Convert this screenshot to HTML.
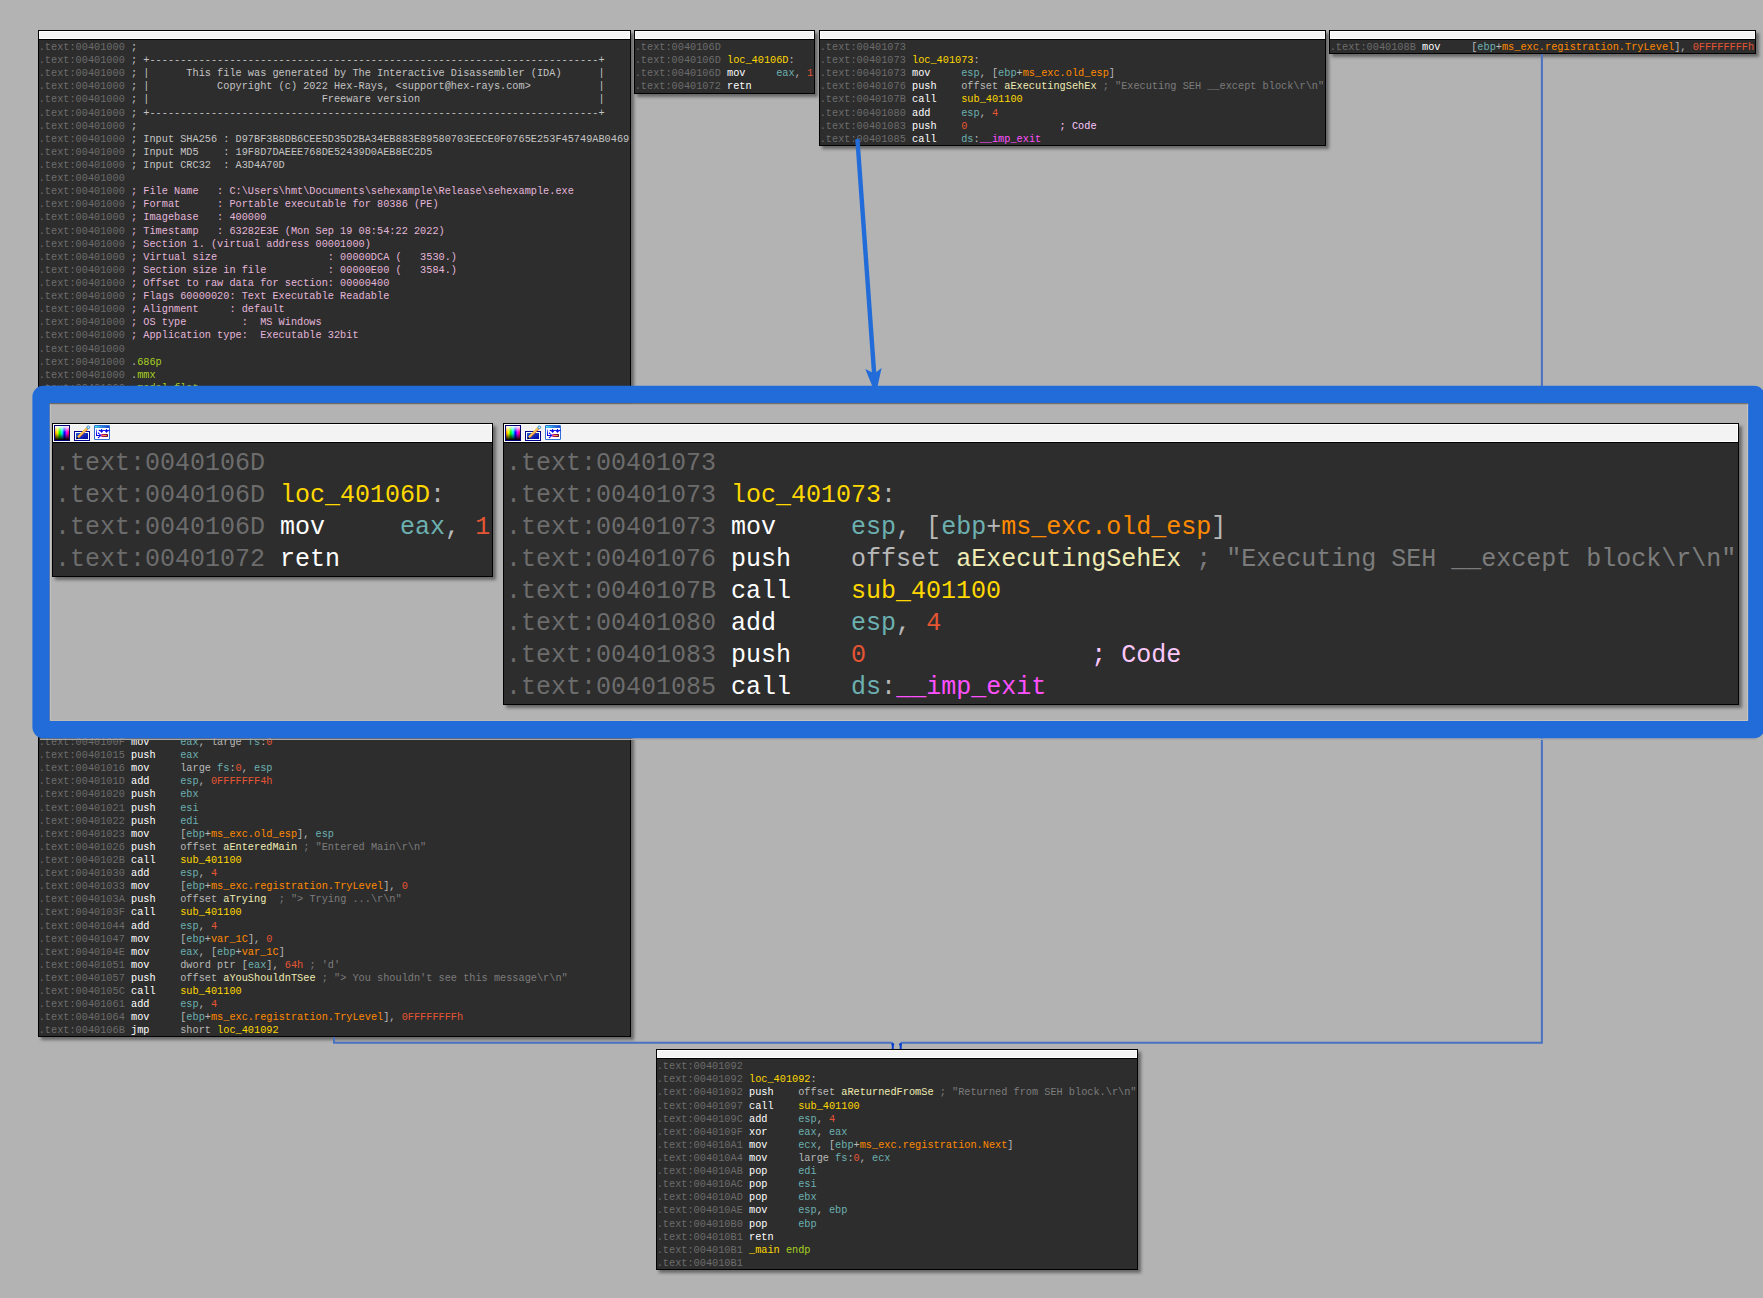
<!DOCTYPE html>
<html><head><meta charset="utf-8"><style>
html,body{margin:0;padding:0}
body{width:1763px;height:1298px;overflow:hidden;background:#b3b3b3;position:relative;font-family:"Liberation Mono",monospace}
.nd{position:absolute;box-sizing:border-box;border:1px solid #000;background:#2d2d2d;box-shadow:3px 3px 3px rgba(0,0,0,.42);overflow:hidden}
.nd .t{position:absolute;left:0;top:0;right:0;height:8px;background:#f3f3f3;box-shadow:inset 0 0 0 1px #fff;border-bottom:1px solid #000}
.l{position:absolute;left:-0.3px;font-size:10.25px;line-height:13px;height:13px;white-space:pre;color:#ccc}
.z{position:absolute;box-sizing:border-box;border:1px solid #000;background:#2d2d2d;box-shadow:3px 3px 3px rgba(0,0,0,.42);overflow:hidden}
.z .t{position:absolute;left:0;top:0;right:0;height:18px;background:#f3f3f3;box-shadow:inset 0 0 0 1px #fff;border-bottom:1px solid #000}
.zct{position:absolute;left:2px;top:24.35px;font-size:25px;line-height:32px;white-space:pre;color:#ccc}
i{font-style:normal}
.ka{color:#6c6c6c}
.km{color:#ffffff}
.kr{color:#6cb0b0}
.kp{color:#b8b8b8}
.kn{color:#e55533}
.ks{color:#ff8a00}
.ky{color:#ffd800}
.kl{color:#f0ecb4}
.kc{color:#7c7c7c}
.kk{color:#fcc8fc}
.ki{color:#ff50ff}
.kh{color:#c4c4c4}
.kq{color:#e4b6da}
.kg{color:#a8d020}
.ic{position:absolute;left:0;top:0}

</style></head><body>
<div class="nd" style="left:38px;top:30px;width:593px;height:1007px"><div class="t"></div>
<div class="l" style="top:10.000px"><i class="ka">.text:00401000</i> <i class="kh">;</i></div><div class="l" style="top:23.113px"><i class="ka">.text:00401000</i> <i class="kh">; +-------------------------------------------------------------------------+</i></div><div class="l" style="top:36.226px"><i class="ka">.text:00401000</i> <i class="kh">; |      This file was generated by The Interactive Disassembler (IDA)      |</i></div><div class="l" style="top:49.339px"><i class="ka">.text:00401000</i> <i class="kh">; |           Copyright (c) 2022 Hex-Rays, &lt;support@hex-rays.com&gt;           |</i></div><div class="l" style="top:62.452px"><i class="ka">.text:00401000</i> <i class="kh">; |                            Freeware version                             |</i></div><div class="l" style="top:75.565px"><i class="ka">.text:00401000</i> <i class="kh">; +-------------------------------------------------------------------------+</i></div><div class="l" style="top:88.678px"><i class="ka">.text:00401000</i> <i class="kh">;</i></div><div class="l" style="top:101.791px"><i class="ka">.text:00401000</i> <i class="kh">; Input SHA256 : D97BF3B8DB6CEE5D35D2BA34EB883E89580703EECE0F0765E253F45749AB0469</i></div><div class="l" style="top:114.904px"><i class="ka">.text:00401000</i> <i class="kh">; Input MD5    : 19F8D7DAEEE768DE52439D0AEB8EC2D5</i></div><div class="l" style="top:128.017px"><i class="ka">.text:00401000</i> <i class="kh">; Input CRC32  : A3D4A70D</i></div><div class="l" style="top:141.130px"><i class="ka">.text:00401000</i></div><div class="l" style="top:154.243px"><i class="ka">.text:00401000</i> <i class="kq">; File Name   : C:\Users\hmt\Documents\sehexample\Release\sehexample.exe</i></div><div class="l" style="top:167.356px"><i class="ka">.text:00401000</i> <i class="kq">; Format      : Portable executable for 80386 (PE)</i></div><div class="l" style="top:180.469px"><i class="ka">.text:00401000</i> <i class="kq">; Imagebase   : 400000</i></div><div class="l" style="top:193.582px"><i class="ka">.text:00401000</i> <i class="kq">; Timestamp   : 63282E3E (Mon Sep 19 08:54:22 2022)</i></div><div class="l" style="top:206.695px"><i class="ka">.text:00401000</i> <i class="kq">; Section 1. (virtual address 00001000)</i></div><div class="l" style="top:219.808px"><i class="ka">.text:00401000</i> <i class="kq">; Virtual size                  : 00000DCA (   3530.)</i></div><div class="l" style="top:232.921px"><i class="ka">.text:00401000</i> <i class="kq">; Section size in file          : 00000E00 (   3584.)</i></div><div class="l" style="top:246.034px"><i class="ka">.text:00401000</i> <i class="kq">; Offset to raw data for section: 00000400</i></div><div class="l" style="top:259.147px"><i class="ka">.text:00401000</i> <i class="kq">; Flags 60000020: Text Executable Readable</i></div><div class="l" style="top:272.260px"><i class="ka">.text:00401000</i> <i class="kq">; Alignment     : default</i></div><div class="l" style="top:285.373px"><i class="ka">.text:00401000</i> <i class="kq">; OS type         :  MS Windows</i></div><div class="l" style="top:298.486px"><i class="ka">.text:00401000</i> <i class="kq">; Application type:  Executable 32bit</i></div><div class="l" style="top:311.599px"><i class="ka">.text:00401000</i></div><div class="l" style="top:324.712px"><i class="ka">.text:00401000</i> <i class="kp">.</i><i class="kg">686p</i></div><div class="l" style="top:337.825px"><i class="ka">.text:00401000</i> <i class="kp">.</i><i class="kg">mmx</i></div><div class="l" style="top:350.938px"><i class="ka">.text:00401000</i> <i class="kp">.</i><i class="kg">model flat</i></div><div class="l" style="top:704.989px"><i class="ka">.text:0040100F</i> <i class="km">mov     </i><i class="kr">eax</i><i class="kp">, large </i><i class="kr">fs</i><i class="kp">:</i><i class="kn">0</i></div><div class="l" style="top:718.102px"><i class="ka">.text:00401015</i> <i class="km">push    </i><i class="kr">eax</i></div><div class="l" style="top:731.215px"><i class="ka">.text:00401016</i> <i class="km">mov     </i><i class="kp">large </i><i class="kr">fs</i><i class="kp">:</i><i class="kn">0</i><i class="kp">, </i><i class="kr">esp</i></div><div class="l" style="top:744.328px"><i class="ka">.text:0040101D</i> <i class="km">add     </i><i class="kr">esp</i><i class="kp">, </i><i class="kn">0FFFFFFF4h</i></div><div class="l" style="top:757.441px"><i class="ka">.text:00401020</i> <i class="km">push    </i><i class="kr">ebx</i></div><div class="l" style="top:770.554px"><i class="ka">.text:00401021</i> <i class="km">push    </i><i class="kr">esi</i></div><div class="l" style="top:783.667px"><i class="ka">.text:00401022</i> <i class="km">push    </i><i class="kr">edi</i></div><div class="l" style="top:796.780px"><i class="ka">.text:00401023</i> <i class="km">mov     </i><i class="kp">[</i><i class="kr">ebp</i><i class="kp">+</i><i class="ks">ms_exc.old_esp</i><i class="kp">], </i><i class="kr">esp</i></div><div class="l" style="top:809.893px"><i class="ka">.text:00401026</i> <i class="km">push    </i><i class="kp">offset </i><i class="kl">aEnteredMain</i><i class="kc"> ; &quot;Entered Main\r\n&quot;</i></div><div class="l" style="top:823.006px"><i class="ka">.text:0040102B</i> <i class="km">call    </i><i class="ky">sub_401100</i></div><div class="l" style="top:836.119px"><i class="ka">.text:00401030</i> <i class="km">add     </i><i class="kr">esp</i><i class="kp">, </i><i class="kn">4</i></div><div class="l" style="top:849.232px"><i class="ka">.text:00401033</i> <i class="km">mov     </i><i class="kp">[</i><i class="kr">ebp</i><i class="kp">+</i><i class="ks">ms_exc.registration.TryLevel</i><i class="kp">], </i><i class="kn">0</i></div><div class="l" style="top:862.345px"><i class="ka">.text:0040103A</i> <i class="km">push    </i><i class="kp">offset </i><i class="kl">aTrying</i><i class="kc">  ; &quot;&gt; Trying ...\r\n&quot;</i></div><div class="l" style="top:875.458px"><i class="ka">.text:0040103F</i> <i class="km">call    </i><i class="ky">sub_401100</i></div><div class="l" style="top:888.571px"><i class="ka">.text:00401044</i> <i class="km">add     </i><i class="kr">esp</i><i class="kp">, </i><i class="kn">4</i></div><div class="l" style="top:901.684px"><i class="ka">.text:00401047</i> <i class="km">mov     </i><i class="kp">[</i><i class="kr">ebp</i><i class="kp">+</i><i class="ks">var_1C</i><i class="kp">], </i><i class="kn">0</i></div><div class="l" style="top:914.797px"><i class="ka">.text:0040104E</i> <i class="km">mov     </i><i class="kr">eax</i><i class="kp">, [</i><i class="kr">ebp</i><i class="kp">+</i><i class="ks">var_1C</i><i class="kp">]</i></div><div class="l" style="top:927.910px"><i class="ka">.text:00401051</i> <i class="km">mov     </i><i class="kp">dword ptr [</i><i class="kr">eax</i><i class="kp">], </i><i class="kn">64h</i><i class="kc"> ; &#x27;d&#x27;</i></div><div class="l" style="top:941.023px"><i class="ka">.text:00401057</i> <i class="km">push    </i><i class="kp">offset </i><i class="kl">aYouShouldnTSee</i><i class="kc"> ; &quot;&gt; You shouldn&#x27;t see this message\r\n&quot;</i></div><div class="l" style="top:954.136px"><i class="ka">.text:0040105C</i> <i class="km">call    </i><i class="ky">sub_401100</i></div><div class="l" style="top:967.249px"><i class="ka">.text:00401061</i> <i class="km">add     </i><i class="kr">esp</i><i class="kp">, </i><i class="kn">4</i></div><div class="l" style="top:980.362px"><i class="ka">.text:00401064</i> <i class="km">mov     </i><i class="kp">[</i><i class="kr">ebp</i><i class="kp">+</i><i class="ks">ms_exc.registration.TryLevel</i><i class="kp">], </i><i class="kn">0FFFFFFFFh</i></div><div class="l" style="top:993.475px"><i class="ka">.text:0040106B</i> <i class="km">jmp     </i><i class="kp">short </i><i class="ky">loc_401092</i></div>
</div>
<div class="nd" style="left:634px;top:30px;width:181px;height:64px"><div class="t"></div><div class="l" style="top:10.000px"><i class="ka">.text:0040106D</i></div><div class="l" style="top:23.113px"><i class="ka">.text:0040106D</i> <i class="ky">loc_40106D</i><i class="kp">:</i></div><div class="l" style="top:36.226px"><i class="ka">.text:0040106D</i> <i class="km">mov     </i><i class="kr">eax</i><i class="kp">, </i><i class="kn">1</i></div><div class="l" style="top:49.339px"><i class="ka">.text:00401072</i> <i class="km">retn    </i></div></div>
<div class="nd" style="left:819px;top:30px;width:507px;height:116px"><div class="t"></div><div class="l" style="top:10.000px"><i class="ka">.text:00401073</i></div><div class="l" style="top:23.113px"><i class="ka">.text:00401073</i> <i class="ky">loc_401073</i><i class="kp">:</i></div><div class="l" style="top:36.226px"><i class="ka">.text:00401073</i> <i class="km">mov     </i><i class="kr">esp</i><i class="kp">, [</i><i class="kr">ebp</i><i class="kp">+</i><i class="ks">ms_exc.old_esp</i><i class="kp">]</i></div><div class="l" style="top:49.339px"><i class="ka">.text:00401076</i> <i class="km">push    </i><i class="kp">offset </i><i class="kl">aExecutingSehEx</i><i class="kc"> ; &quot;Executing SEH __except block\r\n&quot;</i></div><div class="l" style="top:62.452px"><i class="ka">.text:0040107B</i> <i class="km">call    </i><i class="ky">sub_401100</i></div><div class="l" style="top:75.565px"><i class="ka">.text:00401080</i> <i class="km">add     </i><i class="kr">esp</i><i class="kp">, </i><i class="kn">4</i></div><div class="l" style="top:88.678px"><i class="ka">.text:00401083</i> <i class="km">push    </i><i class="kn">0</i><i class="kk">               ; Code</i></div><div class="l" style="top:101.791px"><i class="ka">.text:00401085</i> <i class="km">call    </i><i class="kr">ds</i><i class="kp">:</i><i class="ki">__imp_exit</i></div></div>
<div class="nd" style="left:1329px;top:30px;width:427px;height:24px"><div class="t"></div><div class="l" style="top:10.000px"><i class="ka">.text:0040108B</i> <i class="km">mov     </i><i class="kp">[</i><i class="kr">ebp</i><i class="kp">+</i><i class="ks">ms_exc.registration.TryLevel</i><i class="kp">], </i><i class="kn">0FFFFFFFFh</i></div></div>
<div class="nd" style="left:656px;top:1049px;width:482px;height:221px"><div class="t"></div><div class="l" style="top:10.200px"><i class="ka">.text:00401092</i></div><div class="l" style="top:23.313px"><i class="ka">.text:00401092</i> <i class="ky">loc_401092</i><i class="kp">:</i></div><div class="l" style="top:36.426px"><i class="ka">.text:00401092</i> <i class="km">push    </i><i class="kp">offset </i><i class="kl">aReturnedFromSe</i><i class="kc"> ; &quot;Returned from SEH block.\r\n&quot;</i></div><div class="l" style="top:49.539px"><i class="ka">.text:00401097</i> <i class="km">call    </i><i class="ky">sub_401100</i></div><div class="l" style="top:62.652px"><i class="ka">.text:0040109C</i> <i class="km">add     </i><i class="kr">esp</i><i class="kp">, </i><i class="kn">4</i></div><div class="l" style="top:75.765px"><i class="ka">.text:0040109F</i> <i class="km">xor     </i><i class="kr">eax</i><i class="kp">, </i><i class="kr">eax</i></div><div class="l" style="top:88.878px"><i class="ka">.text:004010A1</i> <i class="km">mov     </i><i class="kr">ecx</i><i class="kp">, [</i><i class="kr">ebp</i><i class="kp">+</i><i class="ks">ms_exc.registration.Next</i><i class="kp">]</i></div><div class="l" style="top:101.991px"><i class="ka">.text:004010A4</i> <i class="km">mov     </i><i class="kp">large </i><i class="kr">fs</i><i class="kp">:</i><i class="kn">0</i><i class="kp">, </i><i class="kr">ecx</i></div><div class="l" style="top:115.104px"><i class="ka">.text:004010AB</i> <i class="km">pop     </i><i class="kr">edi</i></div><div class="l" style="top:128.217px"><i class="ka">.text:004010AC</i> <i class="km">pop     </i><i class="kr">esi</i></div><div class="l" style="top:141.330px"><i class="ka">.text:004010AD</i> <i class="km">pop     </i><i class="kr">ebx</i></div><div class="l" style="top:154.443px"><i class="ka">.text:004010AE</i> <i class="km">mov     </i><i class="kr">esp</i><i class="kp">, </i><i class="kr">ebp</i></div><div class="l" style="top:167.556px"><i class="ka">.text:004010B0</i> <i class="km">pop     </i><i class="kr">ebp</i></div><div class="l" style="top:180.669px"><i class="ka">.text:004010B1</i> <i class="km">retn    </i></div><div class="l" style="top:193.782px"><i class="ka">.text:004010B1</i> <i class="ky">_main</i><i class="kp"> </i><i class="kg">endp</i></div><div class="l" style="top:206.895px"><i class="ka">.text:004010B1</i></div></div>
<svg width="1763" height="1298" style="position:absolute;left:0;top:0">
<g fill="none" stroke="#4a72c2" stroke-width="2">
<path d="M1541.9 54 V1042.8 H900.7"/>
<path d="M334 1037 V1042.8 H892.8"/>
</g>
<path d="M857.4 139 L874.1 373" stroke="#226cd9" stroke-width="4.4" fill="none"/>
<path d="M865.3 369.1 L872.4 372.6 L876 372.2 L881.6 368 L877.4 387 L872.6 387 Z" fill="#226cd9"/>
<path d="M892.8 1043.5 V1049 M900.7 1043.5 V1049" stroke="#0a40d0" stroke-width="2"/><circle cx="892.8" cy="1044.4" r="1.4" fill="#0a40d0"/><circle cx="900.5" cy="1044.4" r="1.4" fill="#0a40d0"/>
<path d="M40 739.2 H1757" stroke="#a8a8a8" stroke-width="1.6"/>
<path fill="#226cd9" fill-rule="evenodd" d="M43.4 385.7 H1754 A11 11 0 0 1 1765 396.7 V727.2 A11 11 0 0 1 1754 738.2 H43.4 A11 11 0 0 1 32.4 727.2 V396.7 A11 11 0 0 1 43.4 385.7 Z M49.8 403.2 V720.8 H1747.9 V403.2 Z"/>
<rect x="49.8" y="403.2" width="1698.3" height="317.6" fill="#b3b3b3"/>
<path d="M49.8 403.7 H1748" stroke="#5a5048" stroke-width="1" opacity="0.8"/>
<path d="M50.3 404 V720.5 H1747.6 V404" stroke="#d8cfc0" stroke-width="1" fill="none" opacity="0.6"/>
</svg>
<div class="z" style="left:52px;top:423px;width:441px;height:154px"><div class="t"></div><svg class="ic" width="60" height="17" viewBox="0 0 60 17">
<defs>
<linearGradient id="huea" x1="0" x2="1" y1="0" y2="0">
<stop offset="0" stop-color="#ff8000"/><stop offset="0.17" stop-color="#ffff00"/><stop offset="0.34" stop-color="#00ff00"/><stop offset="0.5" stop-color="#00ffff"/><stop offset="0.67" stop-color="#0000ff"/><stop offset="0.84" stop-color="#ff00ff"/><stop offset="1" stop-color="#ff0040"/>
</linearGradient>
<linearGradient id="vala" x1="0" x2="0" y1="0" y2="1">
<stop offset="0" stop-color="#fff" stop-opacity="1"/><stop offset="0.45" stop-color="#fff" stop-opacity="0"/><stop offset="0.5" stop-color="#000" stop-opacity="0"/><stop offset="1" stop-color="#000" stop-opacity="1"/>
</linearGradient>
<linearGradient id="tba" x1="0" x2="1" y1="0" y2="0"><stop offset="0" stop-color="#50f0f8"/><stop offset="0.5" stop-color="#2c8ce0"/><stop offset="1" stop-color="#2040c8"/></linearGradient>
<linearGradient id="pba" x1="0" x2="1" y1="0" y2="1"><stop offset="0" stop-color="#2858d0"/><stop offset="1" stop-color="#0000a0"/></linearGradient>
<linearGradient id="lga" x1="0" x2="0" y1="0" y2="1"><stop offset="0" stop-color="#a0a8ff"/><stop offset="0.5" stop-color="#3030f0"/><stop offset="1" stop-color="#0000e0"/></linearGradient>
<linearGradient id="mga" x1="0" x2="1" y1="0" y2="0"><stop offset="0" stop-color="#c8108a"/><stop offset="1" stop-color="#500838"/></linearGradient>
</defs>
<g transform="translate(1,1)">
<rect x="0" y="0" width="16" height="16" fill="#000078"/>
<rect x="1" y="1" width="14" height="14" fill="url(#huea)"/>
<rect x="1" y="1" width="14" height="14" fill="url(#vala)"/>
</g>
<g transform="translate(21,1)">
<rect x="0" y="6" width="16" height="10" fill="#000090"/>
<rect x="1" y="7" width="14" height="8" fill="#f0fcff"/>
<rect x="2" y="8" width="12" height="6" fill="url(#pba)"/>
<path d="M4.2 12.4 L13.4 3.4" stroke="#e07020" stroke-width="2.3"/>
<path d="M3.7 11.9 L12.9 2.9" stroke="#ffcc30" stroke-width="1.1"/>
<path d="M4.3 12.3 L13.2 3.6" stroke="#fff8e0" stroke-width="0.6"/>
<circle cx="14.3" cy="2.3" r="1.35" fill="#d8f0ff" stroke="#2f8fc8" stroke-width="1"/>
<path d="M2.4 14.4 L3.2 12.2 L4.6 13.6 Z" fill="#000"/>
</g>
<g transform="translate(41,1)">
<rect x="0" y="0" width="16" height="15" rx="1.2" fill="#2f6fd6"/><rect x="1" y="3" width="14" height="11" fill="#fff"/>
<rect x="1" y="1" width="14" height="1.6" fill="url(#tba)"/>
<path d="M2.5 4.2 V10.4 H6.6" stroke="url(#lga)" stroke-width="1.05" fill="none"/>
<path d="M4.5 8.3 L7.1 10.4 L4.5 12.5" stroke="#0000f0" stroke-width="1" fill="none"/>
<circle cx="4.5" cy="8.3" r="0.75" fill="#0000f0"/><circle cx="4.5" cy="12.5" r="0.75" fill="#0000f0"/>
<path d="M5.4 5.45 H14.8" stroke="#0000f0" stroke-width="0.9"/>
<circle cx="5.4" cy="5.45" r="0.75" fill="#0000f0"/><circle cx="14.8" cy="5.45" r="0.75" fill="#0000f0"/>
<path d="M7.6 4 V7.3 M12.5 4 V7.3 M6.1 5.7 L7.6 7.4 L9.1 5.7 M11 5.7 L12.5 7.4 L14 5.7" stroke="#0000e8" stroke-width="0.95" fill="none"/>
<rect x="7.2" y="9" width="6.8" height="3" rx="0.7" fill="url(#mga)"/>
<rect x="8.3" y="10" width="4.5" height="1" fill="#ffa030"/>
</g>
</svg>
<div class="zct"><i class="ka">.text:0040106D</i>
<i class="ka">.text:0040106D</i> <i class="ky">loc_40106D</i><i class="kp">:</i>
<i class="ka">.text:0040106D</i> <i class="km">mov     </i><i class="kr">eax</i><i class="kp">, </i><i class="kn">1</i>
<i class="ka">.text:00401072</i> <i class="km">retn    </i></div></div>
<div class="z" style="left:503px;top:423px;width:1236px;height:282px"><div class="t"></div><svg class="ic" width="60" height="17" viewBox="0 0 60 17">
<defs>
<linearGradient id="hueb" x1="0" x2="1" y1="0" y2="0">
<stop offset="0" stop-color="#ff8000"/><stop offset="0.17" stop-color="#ffff00"/><stop offset="0.34" stop-color="#00ff00"/><stop offset="0.5" stop-color="#00ffff"/><stop offset="0.67" stop-color="#0000ff"/><stop offset="0.84" stop-color="#ff00ff"/><stop offset="1" stop-color="#ff0040"/>
</linearGradient>
<linearGradient id="valb" x1="0" x2="0" y1="0" y2="1">
<stop offset="0" stop-color="#fff" stop-opacity="1"/><stop offset="0.45" stop-color="#fff" stop-opacity="0"/><stop offset="0.5" stop-color="#000" stop-opacity="0"/><stop offset="1" stop-color="#000" stop-opacity="1"/>
</linearGradient>
<linearGradient id="tbb" x1="0" x2="1" y1="0" y2="0"><stop offset="0" stop-color="#50f0f8"/><stop offset="0.5" stop-color="#2c8ce0"/><stop offset="1" stop-color="#2040c8"/></linearGradient>
<linearGradient id="pbb" x1="0" x2="1" y1="0" y2="1"><stop offset="0" stop-color="#2858d0"/><stop offset="1" stop-color="#0000a0"/></linearGradient>
<linearGradient id="lgb" x1="0" x2="0" y1="0" y2="1"><stop offset="0" stop-color="#a0a8ff"/><stop offset="0.5" stop-color="#3030f0"/><stop offset="1" stop-color="#0000e0"/></linearGradient>
<linearGradient id="mgb" x1="0" x2="1" y1="0" y2="0"><stop offset="0" stop-color="#c8108a"/><stop offset="1" stop-color="#500838"/></linearGradient>
</defs>
<g transform="translate(1,1)">
<rect x="0" y="0" width="16" height="16" fill="#000078"/>
<rect x="1" y="1" width="14" height="14" fill="url(#hueb)"/>
<rect x="1" y="1" width="14" height="14" fill="url(#valb)"/>
</g>
<g transform="translate(21,1)">
<rect x="0" y="6" width="16" height="10" fill="#000090"/>
<rect x="1" y="7" width="14" height="8" fill="#f0fcff"/>
<rect x="2" y="8" width="12" height="6" fill="url(#pbb)"/>
<path d="M4.2 12.4 L13.4 3.4" stroke="#e07020" stroke-width="2.3"/>
<path d="M3.7 11.9 L12.9 2.9" stroke="#ffcc30" stroke-width="1.1"/>
<path d="M4.3 12.3 L13.2 3.6" stroke="#fff8e0" stroke-width="0.6"/>
<circle cx="14.3" cy="2.3" r="1.35" fill="#d8f0ff" stroke="#2f8fc8" stroke-width="1"/>
<path d="M2.4 14.4 L3.2 12.2 L4.6 13.6 Z" fill="#000"/>
</g>
<g transform="translate(41,1)">
<rect x="0" y="0" width="16" height="15" rx="1.2" fill="#2f6fd6"/><rect x="1" y="3" width="14" height="11" fill="#fff"/>
<rect x="1" y="1" width="14" height="1.6" fill="url(#tbb)"/>
<path d="M2.5 4.2 V10.4 H6.6" stroke="url(#lgb)" stroke-width="1.05" fill="none"/>
<path d="M4.5 8.3 L7.1 10.4 L4.5 12.5" stroke="#0000f0" stroke-width="1" fill="none"/>
<circle cx="4.5" cy="8.3" r="0.75" fill="#0000f0"/><circle cx="4.5" cy="12.5" r="0.75" fill="#0000f0"/>
<path d="M5.4 5.45 H14.8" stroke="#0000f0" stroke-width="0.9"/>
<circle cx="5.4" cy="5.45" r="0.75" fill="#0000f0"/><circle cx="14.8" cy="5.45" r="0.75" fill="#0000f0"/>
<path d="M7.6 4 V7.3 M12.5 4 V7.3 M6.1 5.7 L7.6 7.4 L9.1 5.7 M11 5.7 L12.5 7.4 L14 5.7" stroke="#0000e8" stroke-width="0.95" fill="none"/>
<rect x="7.2" y="9" width="6.8" height="3" rx="0.7" fill="url(#mgb)"/>
<rect x="8.3" y="10" width="4.5" height="1" fill="#ffa030"/>
</g>
</svg>
<div class="zct"><i class="ka">.text:00401073</i>
<i class="ka">.text:00401073</i> <i class="ky">loc_401073</i><i class="kp">:</i>
<i class="ka">.text:00401073</i> <i class="km">mov     </i><i class="kr">esp</i><i class="kp">, [</i><i class="kr">ebp</i><i class="kp">+</i><i class="ks">ms_exc.old_esp</i><i class="kp">]</i>
<i class="ka">.text:00401076</i> <i class="km">push    </i><i class="kp">offset </i><i class="kl">aExecutingSehEx</i><i class="kc"> ; &quot;Executing SEH __except block\r\n&quot;</i>
<i class="ka">.text:0040107B</i> <i class="km">call    </i><i class="ky">sub_401100</i>
<i class="ka">.text:00401080</i> <i class="km">add     </i><i class="kr">esp</i><i class="kp">, </i><i class="kn">4</i>
<i class="ka">.text:00401083</i> <i class="km">push    </i><i class="kn">0</i><i class="kk">               ; Code</i>
<i class="ka">.text:00401085</i> <i class="km">call    </i><i class="kr">ds</i><i class="kp">:</i><i class="ki">__imp_exit</i></div></div>

</body></html>
